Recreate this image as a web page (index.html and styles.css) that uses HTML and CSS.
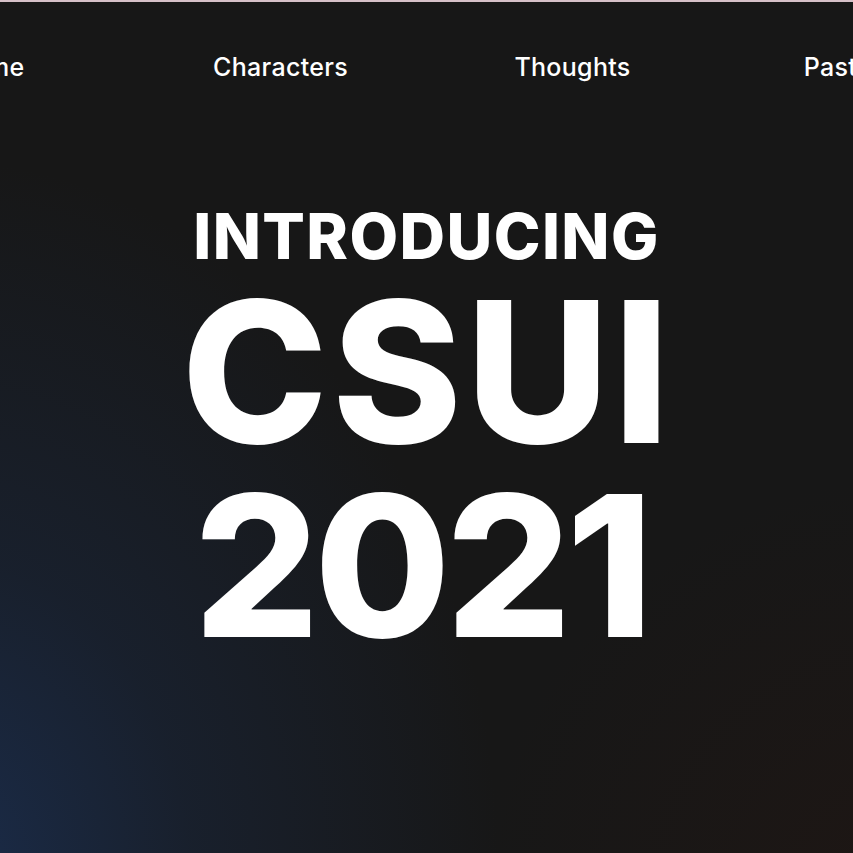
FILE: index.html
```html
<!DOCTYPE html>
<html lang="en">
<head>
<meta charset="utf-8">
<title>CSUI 2021</title>
<link rel="stylesheet" href="styles.css">
</head>
<body>
<div class="page">
  <div class="topline"></div>
  <nav class="nav">
    <a class="nav-item" href="#">Home</a>
    <a class="nav-item" href="#">Characters</a>
    <a class="nav-item" href="#">Thoughts</a>
    <a class="nav-item" href="#">Past CSUI</a>
  </nav>
  <main class="hero">
    <h2 class="intro">INTRODUCING</h2>
    <h1 class="title"><span class="title-line title-name">CSUI</span><span class="title-line title-year">2021</span></h1>
  </main>
</div>
</body>
</html>
```
FILE: styles.css
```css
html, body {
  margin: 0;
  padding: 0;
}
body {
  background: #171717;
  font-family: Inter, "Liberation Sans", sans-serif;
  color: #ffffff;
  overflow: hidden;
}
.page {
  width: 853px;
  height: 853px;
  overflow: hidden;
  background:
    radial-gradient(ellipse 560px 720px at -60px 880px, rgba(27, 48, 84, 0.85), rgba(27, 48, 84, 0.35) 45%, rgba(27, 48, 84, 0) 100%),
    radial-gradient(ellipse 420px 420px at 900px 900px, rgba(34, 22, 18, 0.6), rgba(34, 22, 18, 0) 100%),
    #171717;
}
.topline {
  height: 2px;
  background: #d6c0c8;
}
.nav {
  display: flex;
  justify-content: center;
  padding-top: 49px;
}
.nav-item {
  flex: 0 0 292px;
  text-align: center;
  color: #ffffff;
  text-decoration: none;
  font-size: 25px;
  line-height: 32px;
  font-weight: 500;
  letter-spacing: 0.3px;
  white-space: nowrap;
}
.hero {
  text-align: center;
  padding-top: 118px;
}
.intro {
  margin: 0 0 4px;
  font-size: 63px;
  line-height: 70px;
  font-weight: 800;
  letter-spacing: 1.4px;
}
.title {
  margin: 0;
  font-size: 197px;
  line-height: 194px;
  font-weight: 800;
}
.title-line {
  display: block;
}
.title-name {
  letter-spacing: 4px;
  text-indent: 2px;
}
.title-year {
  letter-spacing: -5px;
  margin-left: -11px;
}
```
